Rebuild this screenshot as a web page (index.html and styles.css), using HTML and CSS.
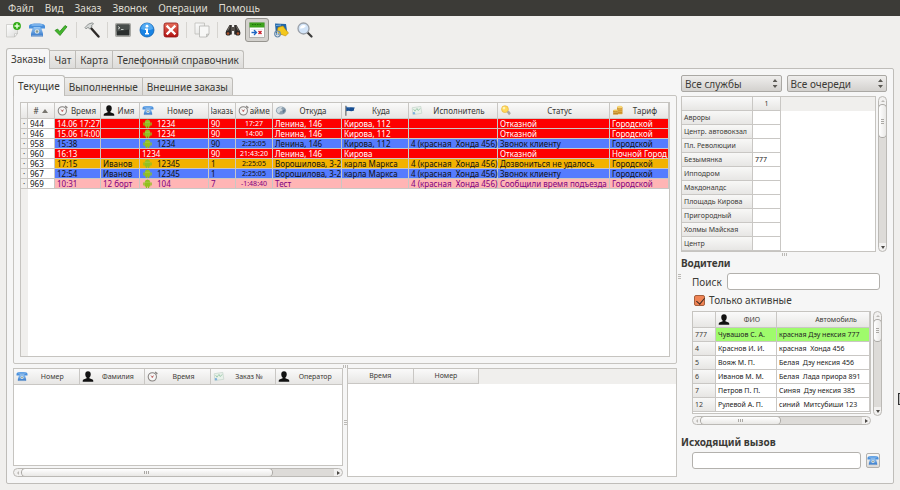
FILE: index.html
```html
<!DOCTYPE html>
<html lang="ru">
<head>
    <meta charset="UTF-8">
    <meta name="viewport" content="width=device-width, initial-scale=1.0">
    <title>Диспетчер такси</title>
    <link rel="stylesheet" href="styles.css">
</head>
<body>
    <svg class="sprite" aria-hidden="true">
        <defs>
            <linearGradient id="blue" x1="0" y1="0" x2="0" y2="1"><stop offset="0" stop-color="#9ccaf5"/><stop offset="1" stop-color="#2f74c8"/></linearGradient>
            <linearGradient id="red" x1="0" y1="0" x2="0" y2="1"><stop offset="0" stop-color="#e8705c"/><stop offset="1" stop-color="#b01010"/></linearGradient>
            <linearGradient id="paper" x1="0" y1="0" x2="1" y2="1"><stop offset="0" stop-color="#fff"/><stop offset="1" stop-color="#dcdcda"/></linearGradient>
        </defs>
        <symbol id="i-new" viewBox="0 0 16 16">
            <path d="M1.500 2.500h11v9l-3 3.500h-8z" fill="url(#paper)" stroke="#c4c4c0" stroke-width=".7"/>
            <path d="M12.500 11.500l-3 .3V15z" fill="#fff" stroke="#b5b5b2" stroke-width=".6"/>
            <circle cx="12" cy="4" r="3.900" fill="#2faa14"/>
            <path d="M12 1.500v5M9.500 4h5" stroke="#e6ffd8" stroke-width="1.500"/>
        </symbol>
        <symbol id="i-phone" viewBox="0 0 16 16">
            <path d="M4 5h8l2 6.500v3H2v-3z" fill="url(#blue)"/>
            <path d="M0 6.500V4C.5 2 4 1.500 8 1.500S15.500 2 16 4v2.500h-4.500V5h-7v1.500z" fill="#4a90dc"/>
            <path d="M2.500 3h11" stroke="#a8d2fa"/>
            <circle cx="8" cy="9.500" r="2.300" fill="#d8e4ea"/>
            <circle cx="8" cy="9.500" r="1.200" fill="#8c9a8a"/>
            <path d="M2.500 14h11" stroke="#a9bdd3"/>
        </symbol>
        <symbol id="i-check" viewBox="0 0 16 16">
            <path d="M2 8.500l2.500-1.500 2.300 2.500L12 3.500l2 1.300L7 13.500z" fill="#43b52c" stroke="#2c8a1c" stroke-width=".8"/>
        </symbol>
        <symbol id="i-hammer" viewBox="0 0 16 16">
            <path d="M6 5l8.500 9.500" stroke="#2e2a28" stroke-width="2.400" stroke-linecap="round"/>
            <path d="M1 5.500L4.500 2 8.500.800l1 1.200L7.500 3.500 8 5 5.500 7 4 5.200 2.200 7z" fill="#d6d9d8" stroke="#6e7472" stroke-width=".7"/>
        </symbol>
        <symbol id="i-term" viewBox="0 0 16 16">
            <rect x=".5" y="1.500" width="15" height="13" rx=".8" fill="#d2d2ce" stroke="#8f8f8b" stroke-width=".7"/>
            <rect x="1.500" y="2.500" width="13" height="11" fill="#2b2f2e"/>
            <path d="M1.500 2.500h13v5l-13 2z" fill="#484d4b"/>
            <path d="M3 4.500l2 1.300-2 1.300M6 7.500h2.500" stroke="#e4e8e4" stroke-width=".8" fill="none"/>
        </symbol>
        <symbol id="i-info" viewBox="0 0 16 16">
            <circle cx="8" cy="8" r="7" fill="#1883e4" stroke="#0e5fae" stroke-width=".8"/>
            <path d="M2 7a6 6 0 0 1 12 0q-6 2.500-12 0z" fill="#53aaf2"/>
            <circle cx="8" cy="4.200" r="1.400" fill="#fff"/>
            <path d="M6 6.500h3V11h1v1.500H6V11h1V8H6z" fill="#fff"/>
        </symbol>
        <symbol id="i-close" viewBox="0 0 16 16">
            <rect x="1" y="1" width="14" height="14" rx="2" fill="url(#red)" stroke="#8f1414" stroke-width=".8"/>
            <path d="M4.500 4.500l7 7M11.500 4.500l-7 7" stroke="#fff" stroke-width="2.400" stroke-linecap="square"/>
        </symbol>
        <symbol id="i-copy" viewBox="0 0 16 16">
            <path d="M1 1h9.500v11H1z" fill="url(#paper)" stroke="#bdbdb9" stroke-width=".8"/>
            <path d="M5.500 4H15v8l-2.500 3h-7z" fill="#f7f7f6" stroke="#b5b5b2" stroke-width=".8"/>
            <path d="M15 12h-2.500v3z" fill="#d5d5d2" stroke="#a8a8a5" stroke-width=".5"/>
        </symbol>
        <symbol id="i-find" viewBox="0 0 16 16">
            <path d="M4.500 3h2.300v9.500H1V9zM11.500 3H9.200v9.500H15V9z" fill="#34302d"/>
            <path d="M6 5h4v4H6z" fill="#55504b"/>
            <path d="M4.500 4.500L2.500 9M11.500 4.500l2 4.500" stroke="#77716b"/>
            <circle cx="3.200" cy="11" r="2.600" fill="#2a2725"/><circle cx="12.800" cy="11" r="2.600" fill="#2a2725"/>
            <circle cx="3" cy="11.500" r="1.300" fill="#a4502c"/><circle cx="13" cy="11.500" r="1.300" fill="#a4502c"/>
        </symbol>
        <symbol id="i-calendar" viewBox="0 0 16 16">
            <rect x=".5" y="1" width="15" height="14.500" fill="#fff" stroke="#9a9a96" stroke-width=".7"/>
            <rect x=".5" y=".5" width="15" height="5" fill="#3da21c"/>
            <path d="M3 2.500h10" stroke="#1f7008" stroke-dasharray="1.500 1"/>
            <path d="M2.500 10.500h4.500M5 8l2.500 2.500L5 13" stroke="#1f66c2" stroke-width="1.300" fill="none"/>
            <path d="M9.500 9l3 3M12.500 9l-3 3" stroke="#c81f2b" stroke-width="1.400"/>
            <path d="M2 7.500h12M2 14h12" stroke="#dcdcd9" stroke-width=".6"/>
        </symbol>
        <symbol id="i-map" viewBox="0 0 16 16">
            <path d="M2 1.500l11 .5 1.500 10L3 13z" fill="#2367a8"/>
            <path d="M5 5.500l5-1.500 2.500 3.500 3 3.500-3 3-5-2L4 11z" fill="#f4c81c" stroke="#c58f08" stroke-width=".6"/>
            <path d="M3 3.500l5-.5" stroke="#79b0df"/>
            <circle cx="4.500" cy="12" r="2.800" fill="none" stroke="#6f8fae" stroke-width="1.300"/>
            <path d="M4.500 9.500v5M2 12h5" stroke="#c6d6e4" stroke-width=".8"/>
        </symbol>
        <symbol id="i-zoom" viewBox="0 0 16 16">
            <path d="M10.500 10.500l4 4" stroke="#3c3c3c" stroke-width="2.200" stroke-linecap="round"/>
            <circle cx="6.500" cy="6.500" r="5.500" fill="#d2e4f8" stroke="#9aa0a8" stroke-width="1.300"/>
            <path d="M3 6.500a3.500 3.500 0 0 1 6-2.500q-2 3-6 2.500z" fill="#fff"/>
        </symbol>
        <symbol id="i-user" viewBox="0 0 16 16">
            <path d="M8 .5c2.600 0 4 1.700 4 4.200 0 2-.8 3.800-2 4.700v1.300l4.500 1.500c1 .4 1.200 1.500 1.200 3.300H.3c0-1.800.2-2.900 1.200-3.300L6 10.700V9.400C4.800 8.500 4 6.700 4 4.700 4 2.200 5.400.5 8 .5z" fill="#111"/>
        </symbol>
        <symbol id="i-clock" viewBox="0 0 16 16">
            <circle cx="7" cy="8.500" r="6" fill="#f6f6f5" stroke="#85817f" stroke-width="1.500"/>
            <path d="M11 1.500l3.500 2.500M12.500 4.500l1.500-2" stroke="#85817f" stroke-width="1.600"/>
            <path d="M7 8.500L4.500 6.500M7 8.500l2.500-2" stroke="#b46a66"/>
            <circle cx="7" cy="8.500" r="1.300" fill="#c06060"/>
        </symbol>
        <symbol id="i-globe" viewBox="0 0 16 16">
            <ellipse cx="8" cy="8" rx="7.500" ry="5.800" fill="#8d9fae"/>
            <path d="M1.500 6.500q4-5 9-3.800L8 5.500l3 2-4 1.500-2 3.500Q1.500 11 1.500 6.500z" fill="#cfd9df"/>
            <path d="M10 8l4-2q1 3-3 6z" fill="#607b92"/>
        </symbol>
        <symbol id="i-flag" viewBox="0 0 16 16">
            <path d="M2 1v14.500" stroke="#555" stroke-width="1.500"/>
            <path d="M2.500 2q3 1.500 5.500 1.300T15 3.500q-2 2.500-1 4.500-3.500 1.500-6 .8T2.500 9z" fill="#164d92"/>
            <path d="M3 3q3 1.500 5 1.200" stroke="#6b9bd0" fill="none"/>
        </symbol>
        <symbol id="i-exec" viewBox="0 0 16 16">
            <path d="M1 4l12.500-2L15 12 2 14z" fill="#e9f1ea" stroke="#b9ccc0" stroke-width=".8"/>
            <path d="M3 6l2 3 3-4 1.500 3L13 5" stroke="#86bf9a" fill="none"/>
            <path d="M2 10l3 .5.5 3H2z" fill="#7fb0dd"/>
        </symbol>
        <symbol id="i-bulb" viewBox="0 0 16 16">
            <circle cx="6.500" cy="6" r="5" fill="#ffd95c" stroke="#e2a92c" stroke-width=".8"/>
            <circle cx="5" cy="4.500" r="2" fill="#fff3b4"/>
            <path d="M9 10.500l3-2.500 3 4-2.500 3z" fill="#ada9a4"/>
        </symbol>
        <symbol id="i-coins" viewBox="0 0 16 16">
            <path d="M6.500 3v10h8V3z" fill="#cf9226"/><ellipse cx="10.500" cy="3" rx="4" ry="1.800" fill="#f5d474"/>
            <path d="M1 8v6h7V8z" fill="#b97a1c"/><ellipse cx="4.500" cy="8" rx="3.500" ry="1.600" fill="#f0c658"/>
            <path d="M6.500 6h8M6.500 9h8M1 11h7M1 13.500h13" stroke="#f0cf7c" stroke-width=".8"/>
        </symbol>
        <symbol id="i-robot" viewBox="0 0 16 16">
            <path d="M3 5.500Q3.500 1 8 1t5 4.500z" fill="#93c01f"/>
            <rect x="3" y="5.500" width="10" height="8" rx="1" fill="#93c01f"/>
            <path d="M1.700 7v3.500M14.300 7v3.500M6.200 12v3M9.800 12v3" stroke="#93c01f" stroke-width="2.400" stroke-linecap="round"/>
            <path d="M3.500 5.700h9" stroke="#c9de8c" stroke-width=".6"/>
        </symbol>
    </svg>

    <nav class="menubar">
        <a href="#">Файл</a>
        <a href="#">Вид</a>
        <a href="#">Заказ</a>
        <a href="#">Звонок</a>
        <a href="#">Операции</a>
        <a href="#">Помощь</a>
    </nav>

    <div class="toolbar">
        <button type="button" aria-label="Новый заказ"><svg class="icon"><use href="#i-new"/></svg></button>
        <button type="button" aria-label="Позвонить"><svg class="icon"><use href="#i-phone"/></svg></button>
        <button type="button" aria-label="Выполнить"><svg class="icon"><use href="#i-check"/></svg></button>
        <span class="sep"></span>
        <button type="button" aria-label="Инструменты"><svg class="icon"><use href="#i-hammer"/></svg></button>
        <span class="sep"></span>
        <button type="button" aria-label="Терминал"><svg class="icon"><use href="#i-term"/></svg></button>
        <button type="button" aria-label="Информация"><svg class="icon"><use href="#i-info"/></svg></button>
        <button type="button" aria-label="Отменить"><svg class="icon"><use href="#i-close"/></svg></button>
        <span class="sep"></span>
        <button type="button" aria-label="Копировать"><svg class="icon"><use href="#i-copy"/></svg></button>
        <span class="sep"></span>
        <button type="button" aria-label="Найти"><svg class="icon"><use href="#i-find"/></svg></button>
        <button type="button" class="pressed" aria-label="Календарь"><svg class="icon"><use href="#i-calendar"/></svg></button>
        <button type="button" aria-label="Карта"><svg class="icon"><use href="#i-map"/></svg></button>
        <button type="button" aria-label="Поиск"><svg class="icon"><use href="#i-zoom"/></svg></button>
    </div>

    <main class="window">
        <div class="tabs">
            <button type="button" class="tab active">Заказы</button>
            <button type="button" class="tab">Чат</button>
            <button type="button" class="tab">Карта</button>
            <button type="button" class="tab">Телефонный справочник</button>
        </div>
        <div class="pane">
            <section class="left">
                <div class="tabs">
                    <button type="button" class="tab active">Текущие</button>
                    <button type="button" class="tab">Выполненные</button>
                    <button type="button" class="tab">Внешние заказы</button>
                </div>
                <div class="orders-pane">
                    <div class="view orders-view">
                        <table class="orders">
                            <colgroup>
                                <col class="c-mark"><col class="c-id"><col class="c-time"><col class="c-name"><col class="c-phone"><col class="c-count"><col class="c-timer"><col class="c-from"><col class="c-to"><col class="c-exec"><col class="c-status"><col class="c-tariff">
                            </colgroup>
                            <thead>
                                <tr>
                                    <th></th>
                                    <th><div class="head"><span>#</span><i class="sort"></i></div></th>
                                    <th><div class="head"><svg class="ico"><use href="#i-clock"/></svg><span>Время</span></div></th>
                                    <th><div class="head"><svg class="ico"><use href="#i-user"/></svg><span>Имя</span></div></th>
                                    <th><div class="head"><svg class="ico"><use href="#i-phone"/></svg><span>Номер</span></div></th>
                                    <th><div class="head"><span>Заказы</span></div></th>
                                    <th><div class="head"><svg class="ico"><use href="#i-clock"/></svg><span>Таймер</span></div></th>
                                    <th><div class="head"><svg class="ico"><use href="#i-globe"/></svg><span>Откуда</span></div></th>
                                    <th><div class="head"><svg class="ico"><use href="#i-flag"/></svg><span>Куда</span></div></th>
                                    <th><div class="head"><svg class="ico"><use href="#i-exec"/></svg><span>Исполнитель</span></div></th>
                                    <th><div class="head"><svg class="ico"><use href="#i-bulb"/></svg><span>Статус</span></div></th>
                                    <th><div class="head"><svg class="ico"><use href="#i-coins"/></svg><span>Тариф</span></div></th>
                                </tr>
                            </thead>
                            <tbody>
                                <tr class="red"><th>·</th><td>944</td><td>14.06 17:27</td><td></td><td><svg class="robot"><use href="#i-robot"/></svg>1234</td><td>90</td><td>17:27</td><td>Ленина, 146</td><td>Кирова, 112</td><td></td><td>Отказной</td><td>Городской</td></tr>
                                <tr class="red"><th>·</th><td>946</td><td>15.06 14:00</td><td></td><td><svg class="robot"><use href="#i-robot"/></svg>1234</td><td>90</td><td>14:00</td><td>Ленина, 146</td><td>Кирова, 112</td><td></td><td>Отказной</td><td>Городской</td></tr>
                                <tr class="blue"><th>·</th><td>958</td><td>15:38</td><td></td><td><svg class="robot"><use href="#i-robot"/></svg>1234</td><td>90</td><td>2:25:05</td><td>Ленина, 146</td><td>Кирова, 112</td><td>4 (красная&nbsp; Хонда 456)</td><td>Звонок клиенту</td><td>Городской</td></tr>
                                <tr class="red"><th>·</th><td>960</td><td>16:13</td><td></td><td>1234</td><td>90</td><td>21:43:20</td><td>Ленина, 146</td><td>Кирова</td><td></td><td>Отказной</td><td>Ночной Город</td></tr>
                                <tr class="yellow"><th>·</th><td>963</td><td>17:15</td><td>Иванов</td><td><svg class="robot"><use href="#i-robot"/></svg>12345</td><td>1</td><td>2:25:05</td><td>Ворошилова, 3-2</td><td>карла Маркса</td><td>4 (красная&nbsp; Хонда 456)</td><td>Дозвониться не удалось</td><td>Городской</td></tr>
                                <tr class="blue"><th>·</th><td>967</td><td>12:54</td><td>Иванов</td><td><svg class="robot"><use href="#i-robot"/></svg>12345</td><td>1</td><td>2:25:05</td><td>Ворошилова, 3-2</td><td>карла Маркса</td><td>4 (красная&nbsp; Хонда 456)</td><td>Звонок клиенту</td><td>Городской</td></tr>
                                <tr class="pink"><th>·</th><td>969</td><td>10:31</td><td>12 борт</td><td><svg class="robot"><use href="#i-robot"/></svg>104</td><td>7</td><td>-1:48:40</td><td>Тест</td><td></td><td>4 (красная&nbsp; Хонда 456)</td><td>Сообщили время подъезда</td><td>Городской</td></tr>
                            </tbody>
                        </table>
                    </div>
                </div>
                <div class="grip"></div>
                <div class="bottom">
                    <div class="calls">
                        <div class="view">
                            <table class="small">
                                <thead>
                                    <tr>
                                        <th><div class="head"><svg class="ico"><use href="#i-phone"/></svg><span>Номер</span></div></th>
                                        <th><div class="head"><svg class="ico"><use href="#i-user"/></svg><span>Фамилия</span></div></th>
                                        <th><div class="head"><svg class="ico"><use href="#i-clock"/></svg><span>Время</span></div></th>
                                        <th><div class="head"><svg class="ico"><use href="#i-exec"/></svg><span>Заказ №</span></div></th>
                                        <th><div class="head"><svg class="ico"><use href="#i-user"/></svg><span>Оператор</span></div></th>
                                    </tr>
                                </thead>
                            </table>
                        </div>
                        <div class="scroll-h"><b class="arrow"></b><div class="track"><div class="thumb calls-thumb"></div></div><b class="arrow next"></b></div>
                    </div>
                    <div class="grip vertical"></div>
                    <div class="view history">
                        <table class="small narrow">
                            <thead>
                                <tr>
                                    <th><div class="head"><span>Время</span></div></th>
                                    <th><div class="head"><span>Номер</span></div></th>
                                </tr>
                            </thead>
                        </table>
                    </div>
                </div>
            </section>

            <div class="grip vertical"></div>

            <aside class="right">
                <div class="filters">
                    <div class="combo"><select aria-label="Службы"><option>Все службы</option></select></div>
                    <div class="combo"><select aria-label="Очереди"><option>Все очереди</option></select></div>
                </div>
                <div class="scroller">
                    <div class="view zones-view">
                        <table class="small zones">
                            <thead><tr><th></th><th>1</th></tr></thead>
                            <tbody>
                                <tr><th>Авроры</th><td></td></tr>
                                <tr><th>Центр. автовокзал</th><td></td></tr>
                                <tr><th>Пл. Революции</th><td></td></tr>
                                <tr><th>Безымянка</th><td>777</td></tr>
                                <tr><th>Ипподром</th><td></td></tr>
                                <tr><th>Макдоналдс</th><td></td></tr>
                                <tr><th>Площадь Кирова</th><td></td></tr>
                                <tr><th>Пригородный</th><td></td></tr>
                                <tr><th>Холмы Майская</th><td></td></tr>
                                <tr><th>Центр</th><td></td></tr>
                            </tbody>
                        </table>
                    </div>
                    <div class="scroll-v"><b class="arrow"></b><div class="track"><div class="thumb"></div></div><b class="arrow next"></b></div>
                </div>
                <div class="grip"></div>

                <h2>Водители</h2>
                <div class="drivers">
                    <div class="search">
                        <label for="search">Поиск</label>
                        <input type="text" id="search">
                    </div>
                    <label class="check"><input type="checkbox" checked>Только активные</label>
                    <div class="scroller">
                        <div class="drivers-main">
                            <div class="view drivers-view">
                                <table class="small drivers-table">
                                    <colgroup><col class="c-num"><col class="c-fio"><col class="c-car"></colgroup>
                                    <thead>
                                        <tr>
                                            <th></th>
                                            <th><div class="head"><svg class="ico"><use href="#i-user"/></svg><span>ФИО</span></div></th>
                                            <th><div class="head car"><span>Автомобиль</span></div></th>
                                        </tr>
                                    </thead>
                                    <tbody>
                                        <tr class="free"><th>777</th><td>Чувашов С. А.</td><td>красная Дэу нексия 777</td></tr>
                                        <tr><th>4</th><td>Краснов И. И.</td><td>красная&nbsp; Хонда 456</td></tr>
                                        <tr><th>5</th><td>Вояж М. П.</td><td>Белая&nbsp; Дэу нексия 456</td></tr>
                                        <tr><th>6</th><td>Иванов М. М.</td><td>Белая&nbsp; Лада приора 891</td></tr>
                                        <tr><th>7</th><td>Петров П. П.</td><td>Синяя&nbsp; Дэу нексия 385</td></tr>
                                        <tr><th>12</th><td>Рулевой А. П.</td><td>синий&nbsp; Митсубиши 123</td></tr>
                                    </tbody>
                                </table>
                            </div>
                            <div class="scroll-h"><b class="arrow"></b><div class="track"><div class="thumb drivers-thumb"></div></div><b class="arrow next"></b></div>
                        </div>
                        <div class="scroll-v drivers-scroll"><b class="arrow"></b><div class="track"><div class="thumb short"></div></div><b class="arrow next"></b></div>
                    </div>
                </div>

                <h2 class="outgoing">Исходящий вызов</h2>
                <div class="dial">
                    <input type="text" aria-label="Исходящий вызов">
                    <button type="button" aria-label="Вызвать"><svg class="ico"><use href="#i-phone"/></svg></button>
                </div>
            </aside>
        </div>
    </main>
    <div class="edge-handle"></div>
</body>
</html>
```

FILE: styles.css
```css
* {
    box-sizing: border-box;
}
body {
    margin: 0;
    height: 100vh;
    display: flex;
    flex-direction: column;
    overflow: hidden;
    background: #f0efed;
    color: #3c3b37;
    font-family: "Noto Sans", "Open Sans", sans-serif;
    font-size: 10px;
    line-height: 14px;
}
button, input, select {
    font: inherit;
    color: inherit;
    margin: 0;
}
.sprite {
    position: absolute;
    width: 0;
    height: 0;
}
.icon {
    width: 16px;
    height: 16px;
    display: block;
}
.ico {
    width: 12px;
    height: 11px;
    flex: none;
}

/* Menu and toolbar */
.menubar {
    display: flex;
    gap: 11px;
    height: 16px;
    padding: 1px 8px;
    background: #3c3b37;
    flex: none;
}
.menubar a {
    color: #dfdbd2;
    text-decoration: none;
}
.toolbar {
    display: flex;
    align-items: center;
    height: 28px;
    padding-left: 1px;
    flex: none;
}
.toolbar button {
    width: 24px;
    height: 24px;
    padding: 3px;
    border: 1px solid transparent;
    border-radius: 3px;
    background: none;
}
.toolbar .pressed {
    border-color: #96948f;
    background: #d3d1cd;
}
.sep {
    width: 7px;
    height: 16px;
    background: linear-gradient(#d6d4d0, #d6d4d0) center / 1px 100% no-repeat;
}

/* Tabs */
.window {
    flex: 1;
    display: flex;
    flex-direction: column;
    min-height: 0;
    padding: 4px 6px 6px;
}
.tabs {
    display: flex;
    align-items: flex-end;
    height: 20px;
    flex: none;
}
.tab {
    height: 18px;
    padding: 0 4px;
    border: 1px solid #bfbdb9;
    border-left-width: 0;
    border-bottom: 0;
    background: linear-gradient(#eeedeb, #dddcda);
}
.tab:last-child {
    border-radius: 0 3px 0 0;
}
.tab.active {
    height: 21px;
    margin-bottom: -1px;
    border-left-width: 1px;
    border-radius: 3px 3px 0 0;
    background: #f6f6f6;
    z-index: 1;
}
.pane {
    flex: 1;
    display: flex;
    min-height: 0;
    padding: 6px;
    border: 1px solid #bfbdb9;
    border-radius: 0 2px 2px 2px;
    background: #f6f6f6;
}
.left {
    flex: 1;
    min-width: 0;
    display: flex;
    flex-direction: column;
}
.orders-pane {
    flex: 1;
    display: flex;
    min-height: 0;
    padding: 6px;
    border: 1px solid #c6c4c0;
    border-radius: 0 2px 2px 2px;
}
.view {
    border: 1px solid #c6c4c0;
    background: #fff;
    overflow: hidden;
    min-height: 0;
}
.orders-view {
    flex: 1;
    background: linear-gradient(to right, #f0efed 7px, #fff 7px);
}

/* Tables */
table {
    table-layout: fixed;
    border-collapse: separate;
    border-spacing: 0;
    width: 100%;
}
th, td {
    padding: 0 2px;
    white-space: nowrap;
    text-align: left;
    font-weight: normal;
    border-right: 1px solid #c9c7c4;
    border-bottom: 1px solid #c9c7c4;
}
thead th {
    height: 16px;
    text-align: center;
    background: linear-gradient(#fafafa, #e7e6e4);
}
.head {
    display: flex;
    align-items: center;
}
.head span {
    flex: 1;
    min-width: 0;
    display: flex;
    justify-content: center;
    overflow: hidden;
}
.orders {
    font-size: 8px;
    line-height: 9px;
}
.orders .head {
    line-height: 14px;
}
.orders tbody td, .orders tbody th {
    height: 10px;
}
.orders tbody th {
    color: #333;
    background: #f0efed;
}
.orders tr td:nth-child(2) {
    background: #fff;
    color: #111;
}
.orders tr td:nth-child(7) {
    font-size: 7px;
    text-align: center;
}
.c-mark { width: 7px; }
.c-id { width: 27px; }
.c-time { width: 46px; }
.c-name { width: 39px; }
.c-phone { width: 69px; }
.c-count { width: 27px; }
.c-timer { width: 37px; }
.c-from { width: 69px; }
.c-to { width: 67px; }
.c-exec { width: 89px; }
.c-status { width: 112px; }
.sort {
    margin-right: 4px;
    border: 3px solid transparent;
    border-top: 0;
    border-bottom: 4px solid #77756f;
}
.robot {
    width: 11px;
    height: 9px;
    margin-right: 4px;
    vertical-align: top;
}
.red td { background: #fe0000; color: #fff; }
.blue td { background: #557cff; color: #111; }
.yellow td { background: #f3b200; color: #111; }
.pink td { background: #ffb5b5; color: #800080; }

.small {
    font-size: 7px;
    line-height: 12px;
}

/* Splitter grips */
.grip {
    flex: none;
    height: 4px;
    background: repeating-linear-gradient(to right, #bbb9b5 0 1px, transparent 1px 2px) center / 5px 3px no-repeat;
}
.grip.vertical {
    width: 4px;
    height: auto;
    background: repeating-linear-gradient(#bbb9b5 0 1px, transparent 1px 2px) center / 3px 5px no-repeat;
}

/* Lower panels */
.bottom {
    display: flex;
    height: 109px;
    flex: none;
}
.calls {
    flex: 1 1 50%;
    min-width: 0;
    display: flex;
    flex-direction: column;
    gap: 2px;
}
.calls .view {
    flex: 1;
}
.calls th:last-child {
    border-right: 0;
}
.history {
    flex: 1 1 50%;
    min-width: 0;
    background: linear-gradient(#f0efed 15px, #fff 15px);
}
.narrow {
    width: 40%;
}
.history thead th {
    height: 15px;
}

/* Scroll bars */
.scroll-h, .scroll-v {
    display: flex;
    flex: none;
    border: 1px solid #bbb9b5;
    border-radius: 5px;
    background: #f2f1f0;
    overflow: hidden;
}
.scroll-h {
    height: 9px;
}
.scroll-v {
    width: 9px;
    flex-direction: column;
}
.track {
    flex: 1;
    display: flex;
    background: #dddbd8;
}
.scroll-v .track {
    flex-direction: column;
}
.thumb {
    border-radius: 4px;
    box-shadow: 0 0 0 1px #aaa8a4;
    background:
        repeating-linear-gradient(to right, #aaa8a4 0 1px, transparent 1px 2px) center / 5px 3px no-repeat,
        linear-gradient(#fff, #e9e8e6);
}
.scroll-v .thumb {
    height: 32px;
    background:
        repeating-linear-gradient(#aaa8a4 0 1px, transparent 1px 2px) center / 3px 5px no-repeat,
        linear-gradient(to right, #fff, #e9e8e6);
}
.scroll-v .short {
    height: 21px;
}
.calls-thumb {
    width: 80%;
}
.drivers-thumb {
    width: 49%;
}
.arrow {
    width: 8px;
    height: 7px;
    flex: none;
    display: flex;
    align-items: center;
    justify-content: center;
}
.arrow::before {
    content: "";
    border: 2px solid transparent;
    border-left-width: 0;
    border-right: 2px solid #bbb9b5;
}
.arrow.next::before {
    border-right-width: 0;
    border-left: 3px solid #4c4a46;
}
.scroll-v .arrow {
    width: 7px;
    height: 8px;
}
.scroll-v .arrow::before {
    border: 2px solid transparent;
    border-top-width: 0;
    border-bottom: 2px solid #bbb9b5;
}
.scroll-v .next::before {
    border-bottom-width: 0;
    border-top: 3px solid #4c4a46;
}

/* Right column */
.right {
    width: 206px;
    flex: none;
    display: flex;
    flex-direction: column;
}
.filters {
    display: flex;
    gap: 5px;
    margin-bottom: 4px;
}
.combo {
    flex: 1;
    display: grid;
    align-items: center;
}
.combo select, .combo::after {
    grid-area: 1 / 1;
}
.combo select {
    appearance: none;
    width: 100%;
    height: 17px;
    padding: 0 3px;
    border: 1px solid #aaa8a4;
    border-radius: 2px;
    background: linear-gradient(#efeeed, #d3d1ce);
}
.combo::after {
    content: "";
    width: 5px;
    height: 9px;
    margin-right: 4px;
    justify-self: end;
    pointer-events: none;
    background: #5b5954;
    clip-path: polygon(50% 0, 100% 33%, 0 33%, 0 67%, 100% 67%, 50% 100%, 0 67%, 0 33%);
}
.scroller {
    display: flex;
    gap: 2px;
}
.zones-view {
    flex: 1;
    background: linear-gradient(#f0efed 14px, #fff 14px);
}
.zones {
    width: 99px;
}
.zones th:first-child {
    width: 71px;
}
.zones thead th {
    height: 14px;
}
.zones tbody tr, .drivers-table tbody tr {
    height: 14px;
}
.small tbody th {
    background: linear-gradient(#f8f8f7, #e7e6e4);
}
.small td {
    color: #222;
}
h2 {
    margin: 0;
    font-size: 10px;
    line-height: 14px;
}
.drivers {
    padding: 3px 5px 0 11px;
}
.search {
    display: flex;
    align-items: center;
    gap: 5px;
    padding-right: 2px;
}
input[type="text"] {
    flex: 1;
    min-width: 0;
    height: 17px;
    padding: 0 4px;
    border: 1px solid #b3b1ad;
    border-radius: 3px;
    background: #fff;
}
.check {
    display: flex;
    align-items: center;
    gap: 4px;
    padding: 3px 2px 4px;
}
.check input {
    appearance: none;
    width: 11px;
    height: 11px;
    border: 1px solid #a5603f;
    border-radius: 2px;
    background: #f08455;
}
.check input:checked::before {
    content: "";
    display: block;
    width: 4px;
    height: 7px;
    margin-left: 3px;
    border: solid #3b2a22;
    border-width: 0 1px 1px 0;
    transform: rotate(40deg);
}
.drivers-main {
    flex: 1;
    min-width: 0;
    display: flex;
    flex-direction: column;
    gap: 2px;
}
.drivers-view {
    height: 103px;
}
.drivers-table .c-num { width: 23px; }
.drivers-table .c-fio { width: 61px; }
.head.car {
    padding-left: 26px;
}
.free td {
    background: #9ffb6c;
}
.drivers-scroll {
    margin-bottom: 9px;
}
.outgoing {
    margin-top: 10px;
}
.dial {
    display: flex;
    align-items: center;
    gap: 5px;
    padding: 3px 7px 0 11px;
}
.dial button {
    width: 14px;
    height: 15px;
    padding: 0;
    border: 1px solid #b3b1ad;
    border-radius: 2px;
    background: linear-gradient(#f8f8f7, #dddbd8);
    display: flex;
    align-items: center;
    justify-content: center;
}

/* Edge of the neighbouring window's handle */
.edge-handle {
    position: absolute;
    right: 0;
    top: 393px;
    width: 2px;
    height: 12px;
    border: 1px solid #333;
    border-right: 0;
    background: #bbb;
}
```
